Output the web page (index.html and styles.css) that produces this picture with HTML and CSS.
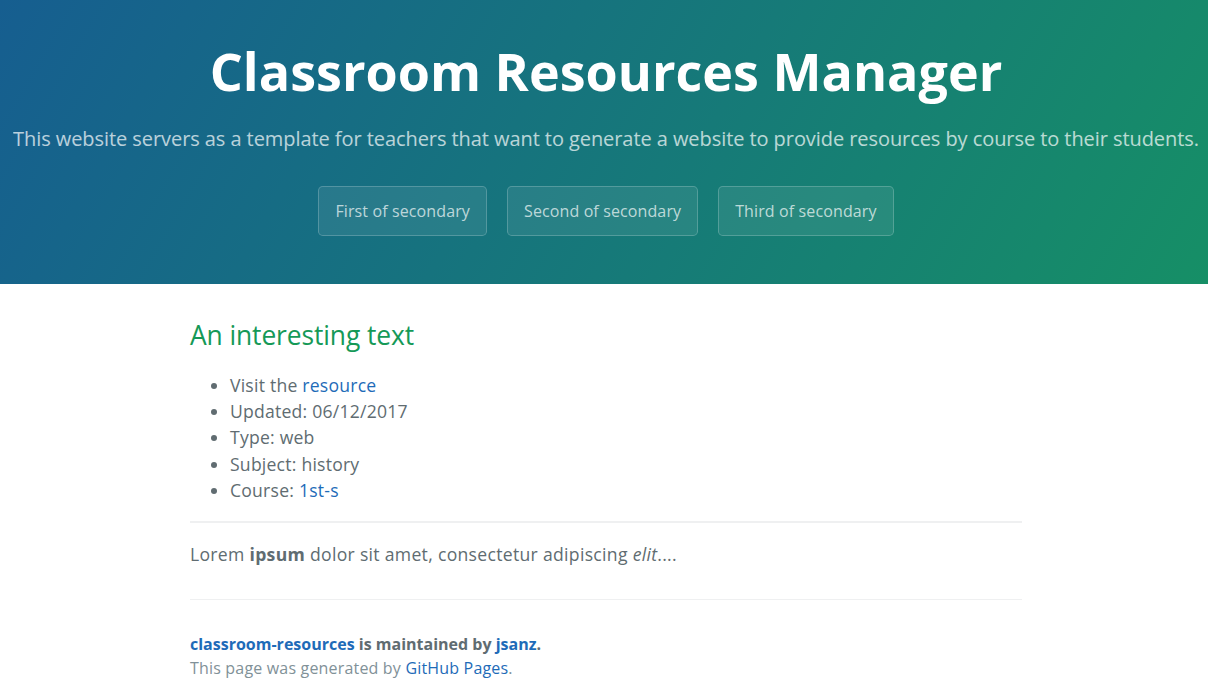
FILE: index.html
```html
<!DOCTYPE html>
<html lang="en">
<head>
<meta charset="UTF-8">
<title>Classroom Resources Manager</title>
<link rel="stylesheet" href="styles.css">
</head>
<body>
<section class="page-header">
  <h1 class="project-name">Classroom Resources Manager</h1>
  <h2 class="project-tagline">This website servers as a template for teachers that want to generate a website to provide resources by course to their students.</h2>
  <div class="btn-row">
    <a href="#" class="btn">First of secondary</a>
    <a href="#" class="btn">Second of secondary</a>
    <a href="#" class="btn">Third of secondary</a>
  </div>
</section>
<section class="main-content">
  <h2 class="section-title">An interesting text</h2>
  <ul class="meta-list">
    <li>Visit the <a href="#">resource</a></li>
    <li>Updated: 06/12/2017</li>
    <li>Type: web</li>
    <li>Subject: history</li>
    <li>Course: <a href="#">1st-s</a></li>
  </ul>
  <hr class="divider">
  <p class="body-text">Lorem <strong>ipsum</strong> dolor sit amet, consectetur adipiscing <em>elit</em>....</p>
  <footer class="site-footer">
    <span class="site-footer-owner"><a href="#">classroom-resources</a> is maintained by <a href="#">jsanz</a>.</span>
    <span class="site-footer-credits">This page was generated by <a href="#">GitHub Pages</a>.</span>
  </footer>
</section>
</body>
</html>
```

FILE: styles.css
```css
* { box-sizing: border-box; }

html, body {
  margin: 0;
  padding: 0;
}

body {
  font-family: "Open Sans", "Helvetica Neue", Helvetica, Arial, sans-serif;
  font-size: 16px;
  line-height: 1.5;
  color: #606c71;
  background: #fff;
}

a {
  color: #1e6bb8;
  text-decoration: none;
}

.page-header {
  color: #fff;
  text-align: center;
  background-color: #168a6c;
  background-image: linear-gradient(120deg, #165e90, #168f66);
  padding: 32px 6px 48px 10px;
}

.project-name {
  font-size: 52px;
  line-height: 78px;
  font-weight: 700;
  margin: 0 0 14px;
  letter-spacing: 0.02px;
}

.project-tagline {
  font-size: 20px;
  line-height: 30px;
  font-weight: 400;
  margin: 0 0 32px;
  opacity: 0.7;
  white-space: nowrap;
  letter-spacing: -0.07px;
}

.btn-row {
  display: flex;
  justify-content: center;
  gap: 20px;
}

.btn {
  display: inline-block;
  color: rgba(255, 255, 255, 0.7);
  background-color: rgba(255, 255, 255, 0.08);
  border: 1px solid rgba(255, 255, 255, 0.2);
  border-radius: 0.3rem;
  padding: 12px 16px;
  font-size: 16px;
  line-height: 24px;
  letter-spacing: 0.12px;
}

.main-content {
  max-width: 1028px;
  margin: 0 auto;
  padding: 32px 96px 32px 100px;
  font-size: 1.1rem;
  word-wrap: normal;
}

.section-title {
  margin: 0 0 16px;
  font-size: 1.5em;
  line-height: 1.5;
  font-weight: 400;
  color: #159957;
  letter-spacing: -0.1px;
}

.meta-list {
  margin: 0 0 1em;
  padding-left: 40px;
  letter-spacing: 0.22px;
}

.divider {
  height: 2px;
  padding: 0;
  margin: 16px 0;
  background-color: #eff0f1;
  border: 0;
}

.body-text {
  margin: 1em 0;
  letter-spacing: 0.3px;
}

.body-text strong { font-weight: 700; }

.site-footer {
  display: block;
  padding-top: 32px;
  margin-top: 32px;
  border-top: 1px solid #eff0f1;
  font-size: 16px;
}

.site-footer-owner {
  display: block;
  font-weight: 700;
}

.site-footer-credits {
  display: block;
  color: #819198;
  letter-spacing: 0.18px;
}
```
